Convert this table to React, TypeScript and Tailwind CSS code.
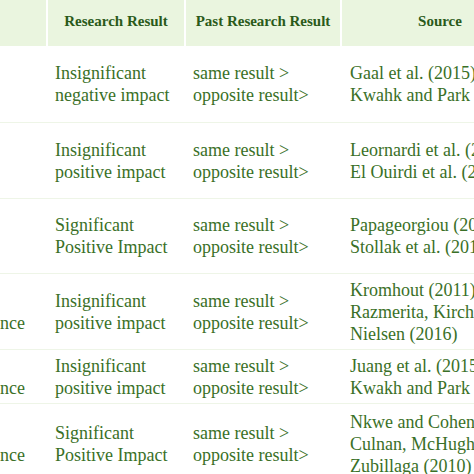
type Row = {
  factor: string[];
  result: string[];
  sources: string[];
  height: string;
};

const rows: Row[] = [
  {
    factor: [],
    result: ["Insignificant", "negative impact"],
    sources: ["Gaal et al. (2015);", "Kwahk and Park (2016)"],
    height: "h-[77px]",
  },
  {
    factor: [],
    result: ["Insignificant", "positive impact"],
    sources: ["Leornardi et al. (2016);", "El Ouirdi et al. (2016)"],
    height: "h-[76px]",
  },
  {
    factor: [],
    result: ["Significant", "Positive Impact"],
    sources: ["Papageorgiou (2010);", "Stollak et al. (2011)"],
    height: "h-[75px]",
  },
  {
    factor: ["Peer", "Influence"],
    result: ["Insignificant", "positive impact"],
    sources: ["Kromhout (2011);", "Razmerita, Kirchner and", "Nielsen (2016)"],
    height: "h-[76px]",
  },
  {
    factor: ["Peer", "Influence"],
    result: ["Insignificant", "positive impact"],
    sources: ["Juang et al. (2015);", "Kwakh and Park (2016)"],
    height: "h-[54px]",
  },
  {
    factor: ["Peer", "Influence"],
    result: ["Significant", "Positive Impact"],
    sources: ["Nkwe and Cohen (2008);", "Culnan, McHugh and", "Zubillaga (2010)"],
    height: "h-[80px]",
  },
];

function Lines({ lines }: { lines: string[] }) {
  return (
    <div className="whitespace-nowrap">
      {lines.map((l, i) => (
        <div key={i}>{l}</div>
      ))}
    </div>
  );
}

export default function App() {
  return (
    <div className="h-[474px] w-[474px] overflow-hidden bg-white font-['Liberation_Serif',serif]">
      <div className="-ml-[50px] w-[588px]">
        <div className="flex h-[46px] gap-[2px] pb-[0px] text-[15px] font-bold text-[#2a5a1a]">
          <div className="w-[96px] bg-[#eaf5df]" />
          <div className="flex w-[136px] items-center justify-center bg-[#eaf5df] pb-[3px]">Research Result</div>
          <div className="flex w-[154px] items-center justify-center bg-[#eaf5df] pb-[3px]">Past Research Result</div>
          <div className="flex w-[196px] items-center justify-center bg-[#eaf5df] pb-[3px]">Source</div>
        </div>
        {rows.map((r, i) => (
          <div
            key={i}
            className={`flex gap-[2px] border-b border-[#eef5e7] text-[18px] leading-[22px] text-[#3a7027] ${r.height}`}
          >
            <div className="flex w-[96px] items-center overflow-hidden pl-[7px]">
              <Lines lines={r.factor} />
            </div>
            <div className="flex w-[136px] items-center pl-[7px]">
              <Lines lines={r.result} />
            </div>
            <div className="flex w-[154px] items-center pl-[7px]">
              <Lines lines={["same result >", "opposite result>"]} />
            </div>
            <div className="flex w-[196px] items-center pl-[8px]">
              <Lines lines={r.sources} />
            </div>
          </div>
        ))}
      </div>
    </div>
  );
}
